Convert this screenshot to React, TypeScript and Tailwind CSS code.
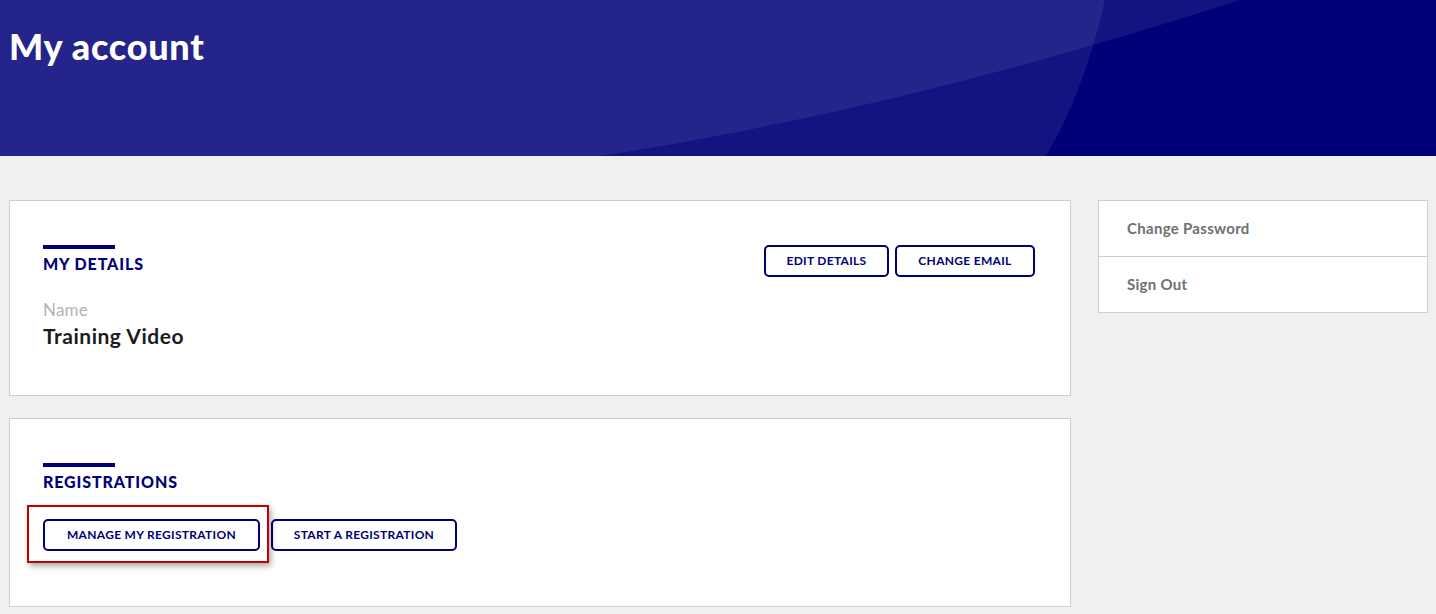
const navy = 'text-[#000078]';

function OutlineButton({ label, width }: { label: string; width: string }) {
  return (
    <button
      className={`h-[32px] ${width} rounded-[5px] border-2 border-[#000078] bg-white text-[12px] font-bold uppercase tracking-[0.025em] ${navy}`}
    >
      {label}
    </button>
  );
}

function SectionTitle({ title }: { title: string }) {
  return (
    <div>
      <div className="h-[4px] w-[72px] bg-[#000078]" />
      <h2 className={`mt-[5px] text-[16px] leading-[20px] font-black uppercase tracking-[0.055em] ${navy}`}>{title}</h2>
    </div>
  );
}

export default function App() {
  return (
    <div className="min-h-screen bg-[#eff0f2] font-['Lato',sans-serif]">
      {/* Hero */}
      <header className="relative h-[156px] overflow-hidden bg-[#000078]">
        <svg className="absolute inset-0" width="1436" height="156" viewBox="0 0 1436 156">
          <path d="M0 0 L1240 0 Q900 110 600 156 L0 156 Z" fill="rgba(255,255,255,0.075)" />
          <path d="M0 0 L1105 0 Q1085 90 1046 156 L0 156 Z" fill="rgba(255,255,255,0.075)" />
        </svg>
        <h1 className="relative pl-[9px] pt-[22px] text-[36px] leading-[48px] font-black tracking-[0.02em] text-white">
          My account
        </h1>
      </header>

      <main className="flex gap-[27px] pl-[9px] pr-[8px] pt-[44px]">
        <div className="flex w-[1062px] flex-col gap-[22px]">
          {/* My details */}
          <section className="border border-[#cfcfcf] bg-white px-[33px] pt-[44px] pb-[46px]">
            <div className="flex items-start justify-between pr-[2px]">
              <SectionTitle title="My details" />
              <div className="flex gap-[6px]">
                <OutlineButton label="Edit details" width="w-[125px]" />
                <OutlineButton label="Change email" width="w-[140px]" />
              </div>
            </div>
            <p className="mt-[21px] text-[17px] leading-[24px] tracking-[0.01em] text-[#b3b3b3]">Name</p>
            <p className="text-[21px] leading-[27px] font-bold tracking-[0.025em] text-[#1c1c1c]">Training Video</p>
          </section>

          {/* Registrations */}
          <section className="border border-[#cfcfcf] bg-white px-[33px] pt-[44px] pb-[55px]">
            <SectionTitle title="Registrations" />
            <div className="mt-[27px] flex gap-[11px]">
              <div className="relative">
                <div className="absolute -left-[16px] -top-[14px] h-[58px] w-[242px] border-2 border-[#c00000] shadow-[2px_3px_6px_rgba(0,0,0,0.35)]" />
                <div className="relative">
                  <OutlineButton label="Manage my registration" width="w-[217px]" />
                </div>
              </div>
              <OutlineButton label="Start a registration" width="w-[186px]" />
            </div>
          </section>
        </div>

        {/* Sidebar */}
        <aside className="w-[330px] self-start border border-[#cfcfcf] bg-white">
          <div className="flex h-[56px] items-center border-b border-[#cfcfcf] px-[28px] text-[15px] font-bold tracking-[0.02em] text-[#707070]">
            Change Password
          </div>
          <div className="flex h-[55px] items-center px-[28px] text-[15px] font-bold tracking-[0.02em] text-[#707070]">
            Sign Out
          </div>
        </aside>
      </main>
    </div>
  );
}
